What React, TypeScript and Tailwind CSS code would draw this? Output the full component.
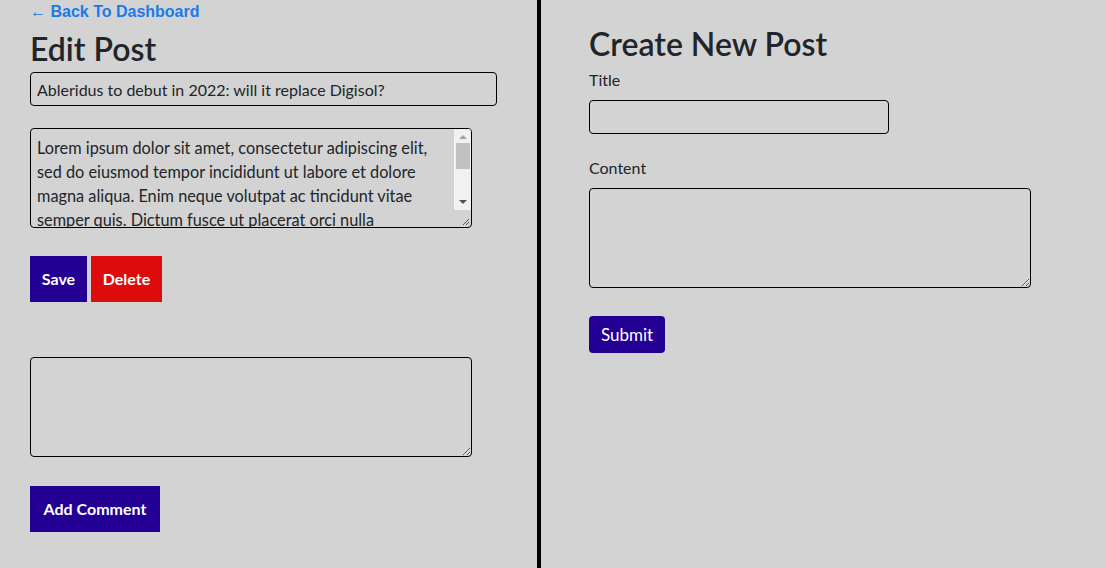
import { useState } from 'react';

const lorem =
  'Lorem ipsum dolor sit amet, consectetur adipiscing elit, sed do eiusmod tempor incididunt ut labore et dolore magna aliqua. Enim neque volutpat ac tincidunt vitae semper quis. Dictum fusce ut placerat orci nulla pellentesque dignissim enim. Sit amet porttitor eget dolor morbi non arcu risus quis.';

function Grip() {
  return (
    <svg width="8" height="8" viewBox="0 0 8 8" className="text-[#555]">
      <path d="M7 1 L1 7 M7 4 L4 7" stroke="currentColor" strokeWidth="1" fill="none" />
    </svg>
  );
}

export default function App() {
  const [title, setTitle] = useState('Ableridus to debut in 2022: will it replace Digisol?');
  const [body, setBody] = useState(lorem);

  return (
    <div className="flex min-h-[568px] bg-[#d3d3d3] text-[#212529] font-['Lato','Noto_Sans',sans-serif]">
      {/* Edit post */}
      <section className="w-[541px] shrink-0 border-r-4 border-black pl-[30px] pt-[3px]">
        <a href="#" className="block font-['Liberation_Sans',Arial,sans-serif] text-base font-bold leading-[18px] text-[#1a7be8]">
          ← Back To Dashboard
        </a>
        <h1 className="mt-[8px] text-[32px] font-semibold leading-[40px]">Edit Post</h1>
        <input
          value={title}
          onChange={(e) => setTitle(e.target.value)}
          className="mt-[3px] block h-[34px] w-[467px] rounded border border-black bg-transparent px-[6px] text-base outline-none"
        />
        <div className="mt-[22px] flex h-[100px] w-[442px] overflow-hidden rounded border border-black">
          <textarea
            value={body}
            onChange={(e) => setBody(e.target.value)}
            className="h-full flex-1 resize-none overflow-hidden bg-transparent pl-[6px] pr-[4px] pt-[7px] text-[16.3px] leading-[24px] outline-none"
          />
          <div className="flex w-[17px] flex-col">
            <div className="flex h-[81px] flex-col items-center bg-[#f1f1f1]">
              <span className="mt-[6px] h-0 w-0 border-x-[4px] border-b-[4px] border-x-transparent border-b-[#a3a3a3]" />
              <span className="mt-[4px] h-[26px] w-[14px] bg-[#c1c1c1]" />
              <span className="mt-auto mb-[6px] h-0 w-0 border-x-[4px] border-t-[4px] border-x-transparent border-t-[#505050]" />
            </div>
            <div className="flex flex-1 items-end justify-end pb-[1px] pr-[1px]">
              <Grip />
            </div>
          </div>
        </div>
        <div className="mt-[28px] flex gap-1">
          <button className="h-[46px] w-[57px] bg-[#230093] text-base font-bold text-white">Save</button>
          <button className="h-[46px] w-[71px] bg-[#dc0c0c] text-base font-bold text-white">Delete</button>
        </div>
        <textarea className="mt-[55px] block h-[100px] w-[442px] rounded border border-black bg-transparent outline-none" />
        <button className="mt-[29px] h-[46px] w-[130px] bg-[#230093] text-base font-bold text-white">Add Comment</button>
      </section>

      {/* Create post */}
      <section className="flex-1 pl-[48px] pt-[24px]">
        <h1 className="text-[32px] font-semibold leading-[40px]">Create New Post</h1>
        <label className="mt-[4px] block text-base leading-[24px]">Title</label>
        <input className="mt-[8px] block h-[34px] w-[300px] rounded border border-black bg-transparent px-[6px] outline-none" />
        <label className="mt-[22px] block text-base leading-[24px]">Content</label>
        <textarea className="mt-[8px] block h-[100px] w-[442px] rounded border border-black bg-transparent outline-none" />
        <button className="mt-[28px] h-[37px] w-[76px] rounded bg-[#230093] text-[17px] text-white">Submit</button>
      </section>
    </div>
  );
}
